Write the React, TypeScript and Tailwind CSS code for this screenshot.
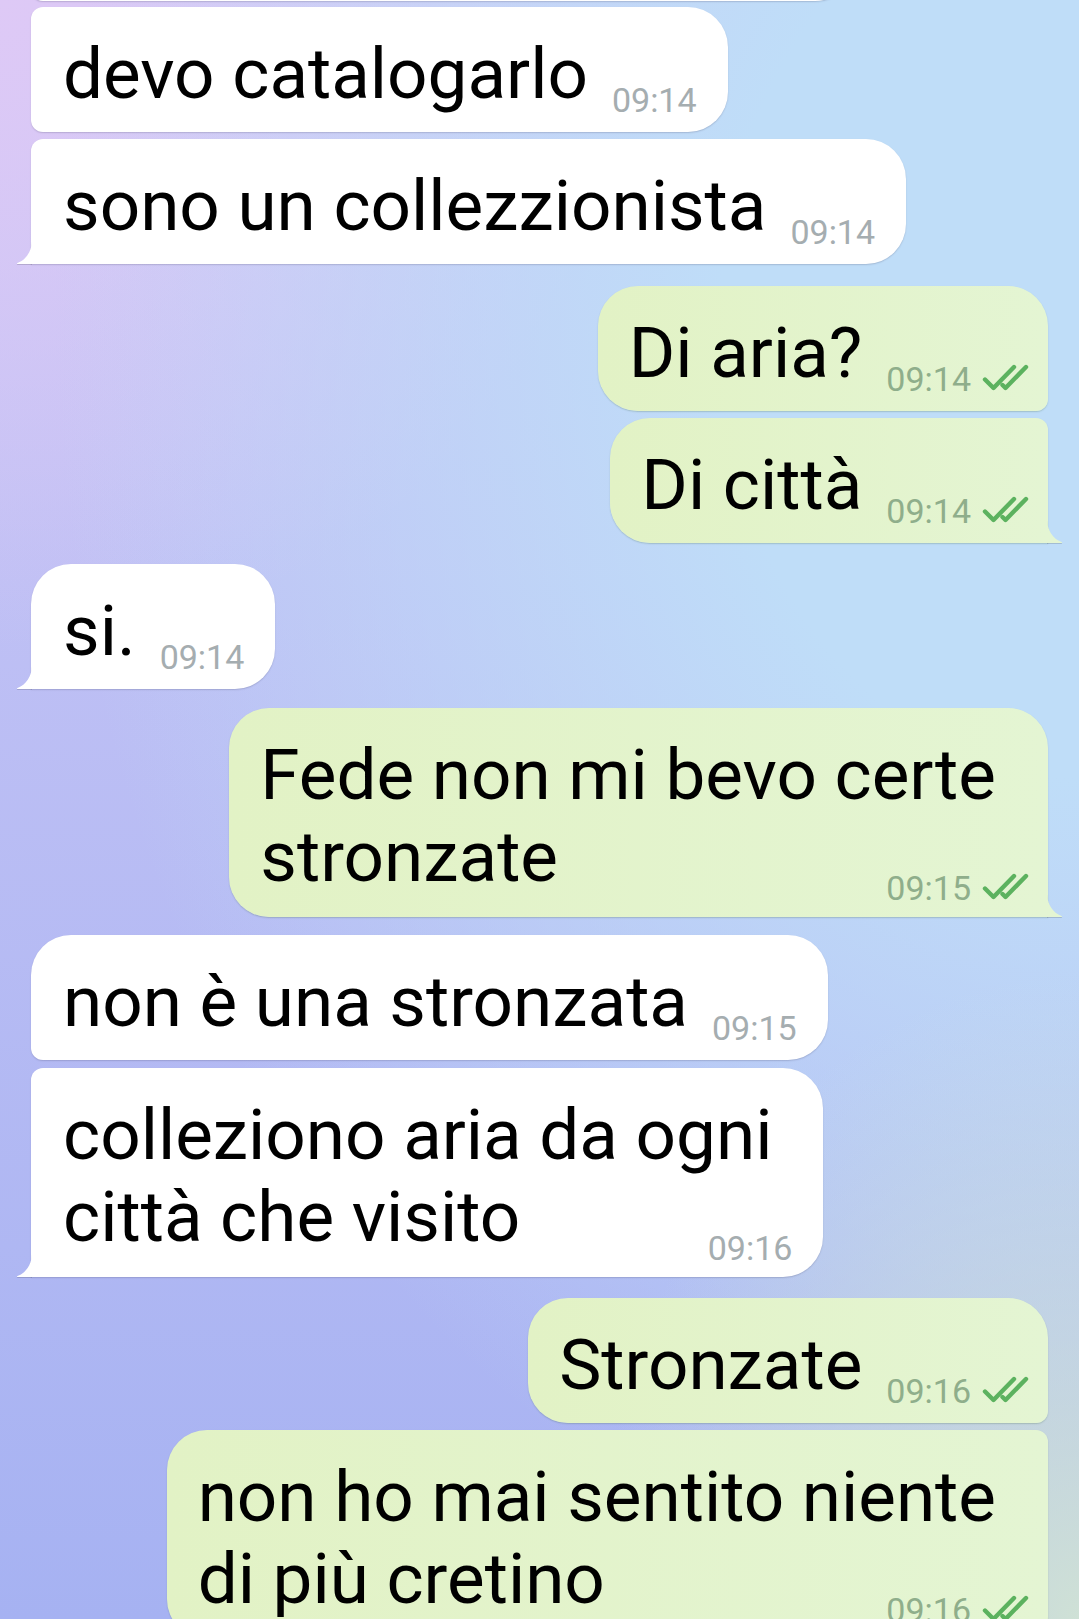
import React from "react";

type Side = "in" | "out";

const Ticks = () => (
  <svg width="47" height="27" viewBox="0 0 47 27" className="mb-[1px] shrink-0">
    <path d="M3 15.5 L11.5 24 L32 3" fill="none" stroke="#5cb25f" strokeWidth="4.4" strokeLinecap="round" strokeLinejoin="round" />
    <path d="M20.5 21 L23.5 24 L44 3" fill="none" stroke="#5cb25f" strokeWidth="4.4" strokeLinecap="round" strokeLinejoin="round" />
  </svg>
);

const Time = ({ side, t, multi }: { side: Side; t: string; multi: boolean }) => {
  const mb = multi ? "mb-[-3px]" : "mb-[2px]";
  return side === "in" ? (
    <span className={`shrink-0 text-[34px] leading-[26px] text-[#a5adb0] ${mb}`}>{t}</span>
  ) : (
    <span className={`shrink-0 flex items-end gap-[11px] ${mb}`}>
      <span className="text-[34px] leading-[26px] text-[#8fae8b]">{t}</span>
      <Ticks />
    </span>
  );
};

const TailIn = () => (
  <svg
    width="16"
    height="24"
    viewBox="0 0 16 24"
    className="absolute left-[-15px] bottom-0 drop-shadow-[0_1px_0.5px_rgba(0,0,0,0.15)]"
  >
    <path d="M16 0 C16 11 10 20 1.5 23 Q0 24 2 24 L16 24 Z" fill="#ffffff" />
  </svg>
);

const TailOut = () => (
  <svg
    width="16"
    height="24"
    viewBox="0 0 16 24"
    className="absolute right-[-15px] bottom-0 drop-shadow-[0_1px_0.5px_rgba(0,0,0,0.15)]"
  >
    <path d="M0 0 C0 11 6 20 14.5 23 Q16 24 14 24 L0 24 Z" fill="#e4f5d3" />
  </svg>
);

type BubbleProps = {
  side: Side;
  lines: string[];
  time: string;
  round: string;
  tail?: boolean;
  mt: string;
  linePad?: string;
};

const Bubble = ({ side, lines, time, round, tail, mt, linePad }: BubbleProps) => {
  const base =
    side === "in"
      ? "self-start bg-white pl-[32px] pr-[31px] shadow-[0_1px_1.5px_rgba(60,60,90,0.22)]"
      : "self-end bg-[linear-gradient(to_right,#e2f2c5,#e4f5d3)] pl-[31px] pr-[19px] shadow-[0_1px_1.5px_rgba(40,80,40,0.22)]";
  const multi = lines.length > 1;
  const last = lines[lines.length - 1];
  return (
    <div className={`relative ${mt} ${base} ${round} pt-[26px] ${multi ? "pb-[19px]" : "pb-[17px]"}`}>
      {lines.slice(0, -1).map((l, i) => (
        <div key={i} className={`text-[71px] leading-[82px] whitespace-nowrap ${linePad ?? ""}`}>
          {l}
        </div>
      ))}
      <div className={`flex items-end ${multi ? "justify-between" : "gap-[24px]"}`}>
        <span className="text-[71px] leading-[82px] whitespace-nowrap">{last}</span>
        <Time side={side} t={time} multi={multi} />
      </div>
      {tail && (side === "in" ? <TailIn /> : <TailOut />)}
    </div>
  );
};

export default function App() {
  return (
    <div
      className="relative w-[1079px] h-[1619px] overflow-hidden text-black bg-[radial-gradient(ellipse_45%_40%_at_100%_100%,#cfe1d6_0%,rgba(207,225,214,0)_100%),radial-gradient(ellipse_95%_80%_at_100%_20%,#bfddf8_35%,rgba(191,221,248,0)_100%),radial-gradient(ellipse_60%_40%_at_0%_0%,#dec9f6_0%,rgba(222,201,246,0)_100%),linear-gradient(to_bottom,#cdc8f6,#a6b2f2)]"
      style={{ fontFamily: "Roboto, 'Noto Sans', sans-serif" }}
    >
      <div className="flex flex-col px-[31px]">
        <div className="self-start mt-[-99px] h-[100px] w-[824px] bg-white rounded-tl-[12px] rounded-bl-[12px] rounded-tr-[40px] rounded-br-[40px] shadow-[0_1px_1.5px_rgba(60,60,90,0.22)]" />
        <Bubble side="in" mt="mt-[6px]" lines={["devo catalogarlo"]} time="09:14" round="rounded-tl-[12px] rounded-bl-[12px] rounded-tr-[40px] rounded-br-[40px]" />
        <Bubble side="in" mt="mt-[7px]" lines={["sono un collezzionista"]} time="09:14" tail round="rounded-tl-[12px] rounded-bl-none rounded-tr-[40px] rounded-br-[40px]" />
        <Bubble side="out" mt="mt-[22px]" lines={["Di aria?"]} time="09:14" round="rounded-tl-[40px] rounded-bl-[40px] rounded-tr-[40px] rounded-br-[12px]" />
        <Bubble side="out" mt="mt-[7px]" lines={["Di città"]} time="09:14" tail round="rounded-tl-[40px] rounded-bl-[40px] rounded-tr-[12px] rounded-br-none" />
        <Bubble side="in" mt="mt-[21px]" lines={["si."]} time="09:14" tail round="rounded-tl-[40px] rounded-bl-none rounded-tr-[40px] rounded-br-[40px]" />
        <Bubble side="out" mt="mt-[19px]" lines={["Fede non mi bevo certe", "stronzate"]} time="09:15" tail linePad="pr-[33px]" round="rounded-tl-[40px] rounded-bl-[40px] rounded-tr-[40px] rounded-br-none" />
        <Bubble side="in" mt="mt-[18px]" lines={["non è una stronzata"]} time="09:15" round="rounded-tl-[40px] rounded-bl-[12px] rounded-tr-[40px] rounded-br-[40px]" />
        <Bubble side="in" mt="mt-[8px]" lines={["colleziono aria da ogni", "città che visito"]} time="09:16" tail linePad="pr-[20px]" round="rounded-tl-[12px] rounded-bl-none rounded-tr-[40px] rounded-br-[40px]" />
        <Bubble side="out" mt="mt-[21px]" lines={["Stronzate"]} time="09:16" round="rounded-tl-[40px] rounded-bl-[40px] rounded-tr-[40px] rounded-br-[12px]" />
        <Bubble side="out" mt="mt-[7px]" lines={["non ho mai sentito niente", "di più cretino"]} time="09:16" tail linePad="pr-[33px]" round="rounded-tl-[40px] rounded-bl-[40px] rounded-tr-[12px] rounded-br-none" />
      </div>
    </div>
  );
}
